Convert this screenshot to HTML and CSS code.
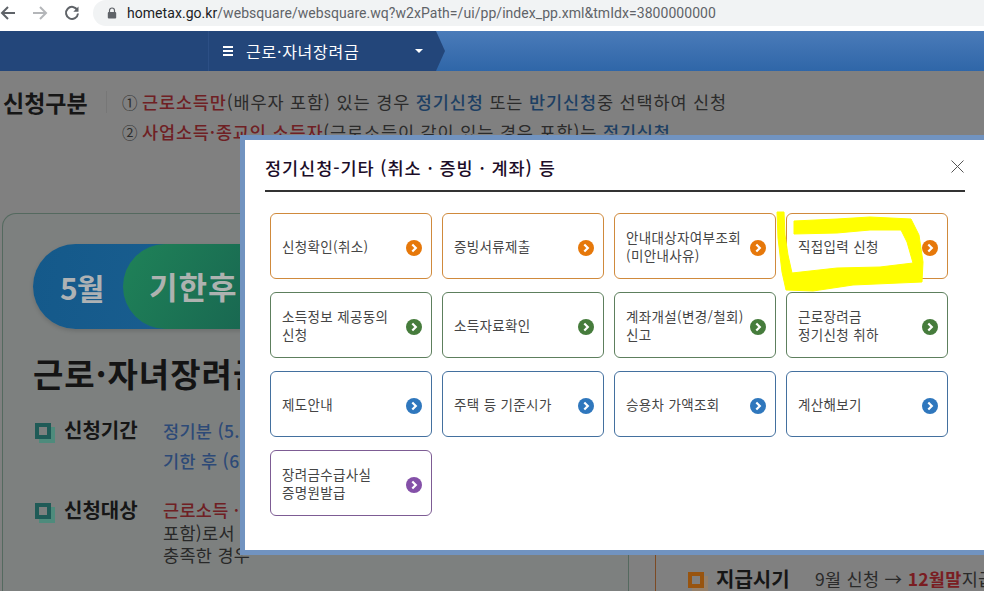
FILE: index.html
```html
<!DOCTYPE html>
<html lang="ko">
<head>
<meta charset="utf-8">
<title>근로·자녀장려금</title>
<link rel="stylesheet" href="styles.css">
</head>
<body>
<header class="toolbar">
  <div class="nav-btns">
    <svg class="ico" viewBox="0 0 16 16"><path d="M15 8H2M8 2 2 8l6 6" fill="none" stroke="#5f6368" stroke-width="2"/></svg>
    <svg class="ico" viewBox="0 0 16 16"><path d="M1 8h13M8 2l6 6-6 6" fill="none" stroke="#b4b6b9" stroke-width="2"/></svg>
    <svg class="ico" viewBox="0 0 16 16"><path d="M13.4 5.2A6 6 0 1 0 14 8.5" fill="none" stroke="#5f6368" stroke-width="2"/><path d="M14.5 1.5v5.2H9.3z" fill="#5f6368"/></svg>
  </div>
  <div class="omnibox">
    <svg class="lock" viewBox="0 0 10 12"><path d="M2.5 5V3.5a2.5 2.5 0 0 1 5 0V5" fill="none" stroke="#5f6368" stroke-width="1.2"/><rect x=".8" y="5" width="8.4" height="6.6" rx="1" fill="#5f6368"/></svg>
    <span class="url"><b>hometax.go.kr</b>/websquare/websquare.wq?w2xPath=/ui/pp/index_pp.xml&amp;tmIdx=3800000000</span>
  </div>
</header>

<nav class="navbar">
  <div class="crumb">
    <span class="burger"><i></i><i></i><i></i></span>
    <span class="crumb-text">근로·자녀장려금</span>
    <span class="caret"></span>
  </div>
</nav>

<main class="page">
  <section class="apply-kind">
    <h2 class="kind-title">신청구분</h2>
    <div class="kind-lines">
      <p class="kind-line"><span class="num">①</span><em class="red">근로소득만</em>(배우자 포함) 있는 경우 <em class="blue">정기신청</em> 또는 <em class="blue">반기신청</em>중 선택하여 신청</p>
      <p class="kind-line"><span class="num">②</span><em class="red">사업소득·종교인 소득자</em>(근로소득이 같이 있는 경우 포함)는 <em class="blue">정기신청</em></p>
    </div>
  </section>

  <div class="columns">
    <section class="panel-left">
      <div class="pill">
        <span class="pill-month">5월</span>
        <span class="pill-late">기한후</span>
      </div>
      <h1 class="panel-title">근로·자녀장려금</h1>
      <div class="info">
        <span class="square teal"></span>
        <span class="info-label">신청기간</span>
        <div class="info-body period">
          <p class="blue-b">정기분 (5.</p>
          <p class="blue-b">기한 후 (6</p>
        </div>
      </div>
      <div class="info target">
        <span class="square teal"></span>
        <span class="info-label">신청대상</span>
        <div class="info-body">
          <p class="red">근로소득 ·</p>
          <p>포함)로서</p>
          <p>충족한 경우</p>
        </div>
      </div>
    </section>
    <section class="panel-right">
      <div class="pay">
        <span class="square orange"></span>
        <span class="info-label">지급시기</span>
        <span class="pay-text">9월 신청 → <b class="red">12월말</b>지급</span>
      </div>
    </section>
  </div>
</main>

<div class="modal">
  <div class="modal-head">
    <h3 class="modal-title">정기신청-기타 (취소 · 증빙 · 계좌) 등</h3>
    <svg class="close" viewBox="0 0 13 13"><path d="M.5.5l12 12M12.5.5l-12 12" stroke="#555" stroke-width="1" fill="none"/></svg>
  </div>
  <div class="grid">
    <a class="card orange-c"><span>신청확인(취소)</span><svg class="go" viewBox="0 0 16 16"><circle cx="8" cy="8" r="8"/><path d="M6.3 4.5 9.8 8l-3.5 3.5"/></svg></a>
    <a class="card orange-c"><span>증빙서류제출</span><svg class="go" viewBox="0 0 16 16"><circle cx="8" cy="8" r="8"/><path d="M6.3 4.5 9.8 8l-3.5 3.5"/></svg></a>
    <a class="card orange-c"><span>안내대상자여부조회<br>(미안내사유)</span><svg class="go" viewBox="0 0 16 16"><circle cx="8" cy="8" r="8"/><path d="M6.3 4.5 9.8 8l-3.5 3.5"/></svg></a>
    <a class="card orange-c"><span>직접입력 신청</span><svg class="go" viewBox="0 0 16 16"><circle cx="8" cy="8" r="8"/><path d="M6.3 4.5 9.8 8l-3.5 3.5"/></svg></a>
    <a class="card green-c"><span>소득정보 제공동의<br>신청</span><svg class="go" viewBox="0 0 16 16"><circle cx="8" cy="8" r="8"/><path d="M6.3 4.5 9.8 8l-3.5 3.5"/></svg></a>
    <a class="card green-c"><span>소득자료확인</span><svg class="go" viewBox="0 0 16 16"><circle cx="8" cy="8" r="8"/><path d="M6.3 4.5 9.8 8l-3.5 3.5"/></svg></a>
    <a class="card green-c"><span>계좌개설(변경/철회)<br>신고</span><svg class="go" viewBox="0 0 16 16"><circle cx="8" cy="8" r="8"/><path d="M6.3 4.5 9.8 8l-3.5 3.5"/></svg></a>
    <a class="card green-c"><span>근로장려금<br>정기신청 취하</span><svg class="go" viewBox="0 0 16 16"><circle cx="8" cy="8" r="8"/><path d="M6.3 4.5 9.8 8l-3.5 3.5"/></svg></a>
    <a class="card blue-c"><span>제도안내</span><svg class="go" viewBox="0 0 16 16"><circle cx="8" cy="8" r="8"/><path d="M6.3 4.5 9.8 8l-3.5 3.5"/></svg></a>
    <a class="card blue-c"><span>주택 등 기준시가</span><svg class="go" viewBox="0 0 16 16"><circle cx="8" cy="8" r="8"/><path d="M6.3 4.5 9.8 8l-3.5 3.5"/></svg></a>
    <a class="card blue-c"><span>승용차 가액조회</span><svg class="go" viewBox="0 0 16 16"><circle cx="8" cy="8" r="8"/><path d="M6.3 4.5 9.8 8l-3.5 3.5"/></svg></a>
    <a class="card blue-c"><span>계산해보기</span><svg class="go" viewBox="0 0 16 16"><circle cx="8" cy="8" r="8"/><path d="M6.3 4.5 9.8 8l-3.5 3.5"/></svg></a>
    <a class="card purple-c"><span>장려금수급사실<br>증명원발급</span><svg class="go" viewBox="0 0 16 16"><circle cx="8" cy="8" r="8"/><path d="M6.3 4.5 9.8 8l-3.5 3.5"/></svg></a>
  </div>
</div>

<svg class="marker" viewBox="0 0 984 591">
  <path d="M777 212L778 238L782 272L786 290L813 291L853 285L922 282L923 262L919 235L911 219L870 217L837 219L794 221L794 234L837 233L870 230L901 230L907 242L913 263L880 267L837 268L792 273L788 255L785 235L784 212Z" fill="#ffff00" stroke="#ffff00" stroke-width="1" stroke-linejoin="round"/>
</svg>
</body>
</html>
```
FILE: styles.css
```css
* { box-sizing: border-box; margin: 0; padding: 0; }
html, body { width: 984px; height: 591px; overflow: hidden; }
body {
  position: relative;
  background: #808080;
  font-family: "Noto Sans CJK KR", "Noto Sans", sans-serif;
  color: #1c1c1c;
}
em { font-style: normal; }

.toolbar { height: 31px; background: #fff; display: flex; align-items: flex-start; }
.nav-btns { width: 93px; height: 26px; display: flex; align-items: center; gap: 16px; }
.ico { width: 16px; height: 16px; flex: none; }
.omnibox {
  flex: 1; height: 26px; background: #f1f3f4;
  border-radius: 13px 0 0 13px;
  display: flex; align-items: center; padding-left: 14px;
}
.lock { width: 10px; height: 12px; margin-right: 10px; flex: none; }
.url { font: 14px/26px "Roboto", "Liberation Sans", sans-serif; letter-spacing: .05px; color: #5f6368; white-space: nowrap; }
.url b { font-weight: 400; color: #202124; }

.navbar {
  height: 40px;
  background: linear-gradient(#4a7bb9, #2f66a8);
}
.crumb {
  width: 445px; height: 40px;
  background: linear-gradient(90deg, #23467a 208px, #2c4f85 208px, #2c4f85 209px, #23467a 209px);
  clip-path: polygon(0 0, 436px 0, 445px 50%, 436px 100%, 0 100%);
  display: flex; align-items: center; padding-left: 223px;
}
.burger { display: flex; flex-direction: column; gap: 2px; width: 10px; margin-right: 13px; }
.burger i { display: block; height: 2px; background: #fff; }
.crumb-text { color: #fff; font-size: 16px; letter-spacing: .75px; width: 169px; white-space: nowrap; }
.caret { border: 4px solid transparent; border-top-color: #fff; border-bottom: 0; width: 0; height: 0; }

.page { height: 520px; overflow: hidden; }
.apply-kind { display: flex; padding: 16px 0 0 3px; height: 142px; }
.kind-title { font-size: 23px; font-weight: 700; line-height: 30px; width: 103px; color: #161616; flex: none; white-space: nowrap; }
.kind-lines { border-left: 1px solid #777; height: 22px; padding-left: 15px; margin-top: 4px; }
.kind-line { font-size: 17.5px; line-height: 29px; letter-spacing: .85px; color: #2b2b2b; white-space: nowrap; margin-top: -4px; }
.kind-line + .kind-line { margin-top: 0; }
.num { display: inline-block; width: 20px; letter-spacing: 0; font-size: 15.5px; }
.red { color: #6f2024; font-weight: 500; }
.blue { color: #1d3f63; font-weight: 500; }

.columns { display: flex; padding-left: 2px; }
.panel-left {
  width: 627px; height: 420px; flex: none;
  border: 1px solid #54695f; border-bottom: 0;
  border-radius: 14px 14px 0 0;
  background: #7d807f;
  padding: 30px 0 0 30px;
  overflow: hidden;
}
.pill {
  width: 260px; height: 85px; border-radius: 43px;
  background: linear-gradient(100deg, #14598a, #1d6193);
  display: flex; align-items: center;
  box-shadow: 0 2px 4px rgba(0,0,0,.15);
}
.pill-month { width: 90px; padding-left: 27px; font-size: 30px; font-weight: 700; color: #aeb2b4; letter-spacing: -1px; flex: none; }
.pill-late {
  width: 170px; height: 85px; border-radius: 43px;
  background: linear-gradient(120deg, #1f8258, #17604f);
  font-size: 31px; font-weight: 700; color: #aeb2b0; line-height: 83px; padding-left: 26px; letter-spacing: 1px; flex: none;
}
.panel-title { font-size: 33px; font-weight: 700; line-height: 46px; margin-top: 21px; color: #141414; white-space: nowrap; letter-spacing: 1px; }
.info { display: flex; align-items: flex-start; margin-top: 20px; }
.square { width: 16px; height: 16px; border: 4px solid #1f5b57; box-shadow: 4px 4px 0 #4e8b7c; flex: none; margin: 7px 13px 0 2px; }
.square.orange { border-color: #98540f; box-shadow: 4px 4px 0 #95806a; margin-left: 0; margin-right: 12px; }
.info-label { font-size: 20px; font-weight: 700; line-height: 28px; width: 99px; flex: none; color: #161616; white-space: nowrap; }
.info-body { font-size: 17.5px; line-height: 22.5px; letter-spacing: .3px; color: #282828; white-space: nowrap; margin-top: 3px; }
.period { margin-top: 0; }
.period p { line-height: 30px; }
.blue-b { color: #2d4a77; font-weight: 500; }
.target { margin-top: 20px; }

.panel-right {
  margin-left: 26px; flex: 1; height: 420px;
  border-left: 1px solid #7c4a24;
  padding: 352px 0 0 32px;
}
.pay { display: flex; align-items: flex-start; }
.pay-text { font-size: 17.5px; line-height: 28px; letter-spacing: .3px; color: #2a2a2a; white-space: nowrap; }
.pay-text b { font-weight: 700; color: #7a1d22; }

.modal {
  position: absolute; left: 240px; top: 135px;
  width: 750px; height: 420px;
  background: #fff;
  border: 5px solid #7193c0;
  padding: 0 0 0 20px;
}
.modal-head {
  width: 700px; height: 52px;
  border-bottom: 2px solid #333;
  display: flex; align-items: center; justify-content: space-between;
  padding-top: 4px;
}
.modal-title { font-size: 17.5px; font-weight: 500; color: #1c0d28; letter-spacing: .95px; white-space: nowrap; }
.close { width: 13px; height: 13px; margin-right: 1px; margin-bottom: 2px; }
.grid {
  display: grid;
  grid-template-columns: repeat(4, 162px);
  grid-auto-rows: 66px;
  column-gap: 10px; row-gap: 13px;
  margin: 21px 0 0 5px;
}
.card {
  display: flex; align-items: center; justify-content: space-between;
  border: 1px solid; border-radius: 6px;
  padding: 0 9px 0 11px;
  font-size: 13.5px; line-height: 18.5px; color: #454545;
  letter-spacing: .35px; white-space: nowrap;
}
.go { width: 16px; height: 16px; flex: none; margin-top: 3px; }
.go path { fill: none; stroke: #fff; stroke-width: 2.2; }
.orange-c { border-color: #d08a3c; }
.orange-c .go circle { fill: #e6780a; }
.green-c { border-color: #5d7f5d; }
.green-c .go circle { fill: #467c3c; }
.blue-c { border-color: #43709f; }
.blue-c .go circle { fill: #2f77bd; }
.purple-c { border-color: #7d5c94; }
.purple-c .go circle { fill: #8450a8; }

.marker { position: absolute; left: 0; top: 0; width: 984px; height: 591px; pointer-events: none; }
```
